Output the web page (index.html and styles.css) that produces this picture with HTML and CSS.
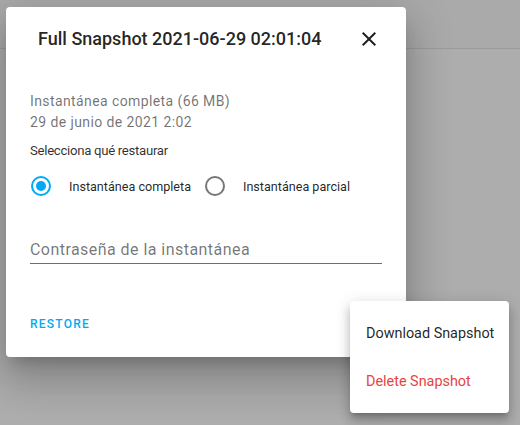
FILE: index.html
```html
<!DOCTYPE html>
<html lang="es">
<head>
<meta charset="utf-8">
<link rel="stylesheet" href="styles.css">
</head>
<body>
<div class="page">
  <div class="appbar"></div>
</div>
<div class="dialog">
  <div class="dialog-header">
    <h2 class="dialog-title">Full Snapshot 2021-06-29 02:01:04</h2>
    <button class="close-btn" aria-label="Cerrar">
      <svg viewBox="0 0 24 24" width="24" height="24"><path fill="#212121" d="M19 6.41L17.59 5 12 10.59 6.41 5 5 6.41 10.59 12 5 17.59 6.41 19 12 13.41 17.59 19 19 17.59 13.41 12z"/></svg>
    </button>
  </div>
  <div class="dialog-content">
    <div class="details">
      <div>Instantánea completa (66 MB)</div>
      <div>29 de junio de 2021 2:02</div>
    </div>
    <div class="section-label">Selecciona qué restaurar</div>
    <div class="radio-row">
      <label class="radio-field">
        <span class="radio checked"><span class="dot"></span></span>
        <span class="radio-label">Instantánea completa</span>
      </label>
      <label class="radio-field second">
        <span class="radio"></span>
        <span class="radio-label">Instantánea parcial</span>
      </label>
    </div>
    <div class="textfield">
      <span class="placeholder">Contraseña de la instantánea</span>
    </div>
  </div>
  <div class="dialog-actions">
    <button class="text-btn">RESTORE</button>
  </div>
</div>
<div class="menu">
  <div class="menu-item">Download Snapshot</div>
  <div class="menu-item danger">Delete Snapshot</div>
</div>
</body>
</html>
```
FILE: styles.css
```css
html, body {
  margin: 0;
  padding: 0;
}
body {
  width: 520px;
  height: 425px;
  overflow: hidden;
  background: #adadad;
  font-family: Roboto, "Liberation Sans", sans-serif;
  position: relative;
}
.page {
  height: 425px;
}
.appbar {
  height: 48px;
  background: #aaaaaa;
  border-bottom: 1px solid #9b9b9b;
}
.dialog {
  position: absolute;
  left: 6px;
  top: 7px;
  width: 400px;
  height: 350px;
  background: #fff;
  border-radius: 4px;
  box-shadow: 0 11px 15px -7px rgba(0,0,0,.2), 0 24px 38px 3px rgba(0,0,0,.14), 0 9px 46px 8px rgba(0,0,0,.12);
  display: flex;
  flex-direction: column;
}
.dialog-header {
  height: 64px;
  display: flex;
  align-items: center;
  padding: 0 25px 0 32px;
}
.dialog-title {
  flex: 1;
  margin: 0;
  font-size: 18px;
  font-weight: 500;
  color: rgba(0,0,0,.87);
  line-height: 24px;
  white-space: nowrap;
}
.close-btn {
  border: 0;
  background: none;
  padding: 0;
  width: 24px;
  height: 24px;
  display: flex;
}
.dialog-content {
  padding: 0 24px;
}
.details {
  margin-top: 20px;
  font-size: 14px;
  letter-spacing: 0.4px;
  line-height: 21px;
  color: rgba(0,0,0,.56);
}
.section-label {
  margin-top: 8px;
  font-size: 13.2px;
  letter-spacing: -0.3px;
  line-height: 20px;
  color: rgba(0,0,0,.82);
}
.radio-row {
  margin-top: 5px;
  height: 40px;
  display: flex;
  align-items: center;
}
.radio-field {
  display: flex;
  align-items: center;
}
.radio-field.second {
  margin-left: 13px;
}
.radio {
  box-sizing: border-box;
  width: 20px;
  height: 20px;
  border-radius: 50%;
  border: 2px solid #777;
  margin-left: 1px;
  display: flex;
  align-items: center;
  justify-content: center;
}
.radio.checked {
  border-color: #03a9f4;
}
.dot {
  width: 10px;
  height: 10px;
  border-radius: 50%;
  background: #03a9f4;
}
.radio-label {
  margin-left: 18px;
  font-size: 12.6px;
  color: rgba(0,0,0,.87);
}
.textfield {
  margin-top: 22px;
  height: 36px;
  box-sizing: border-box;
  padding-bottom: 3px;
  border-bottom: 1px solid #6e6e6e;
  display: flex;
  align-items: flex-end;
}
.placeholder {
  font-size: 16px;
  line-height: 20px;
  color: rgba(0,0,0,.55);
  letter-spacing: 0.45px;
}
.dialog-actions {
  margin-top: auto;
  height: 66px;
  padding: 0 24px;
  display: flex;
  align-items: center;
}
.text-btn {
  border: 0;
  background: none;
  padding: 0;
  font-family: inherit;
  font-size: 12px;
  font-weight: 500;
  letter-spacing: 1.25px;
  color: #03a9f4;
  line-height: 1;
}
.menu {
  position: absolute;
  left: 350px;
  top: 301px;
  width: 159px;
  padding: 8px 0;
  background: #fff;
  border-radius: 4px;
  box-shadow: 0 5px 5px -3px rgba(0,0,0,.2), 0 8px 10px 1px rgba(0,0,0,.14), 0 3px 14px 2px rgba(0,0,0,.12);
}
.menu-item {
  height: 48px;
  padding: 0 16px;
  display: flex;
  align-items: center;
  font-size: 14.4px;
  white-space: nowrap;
  color: rgba(0,0,0,.87);
}
.menu-item.danger {
  color: #e5453d;
}
```
